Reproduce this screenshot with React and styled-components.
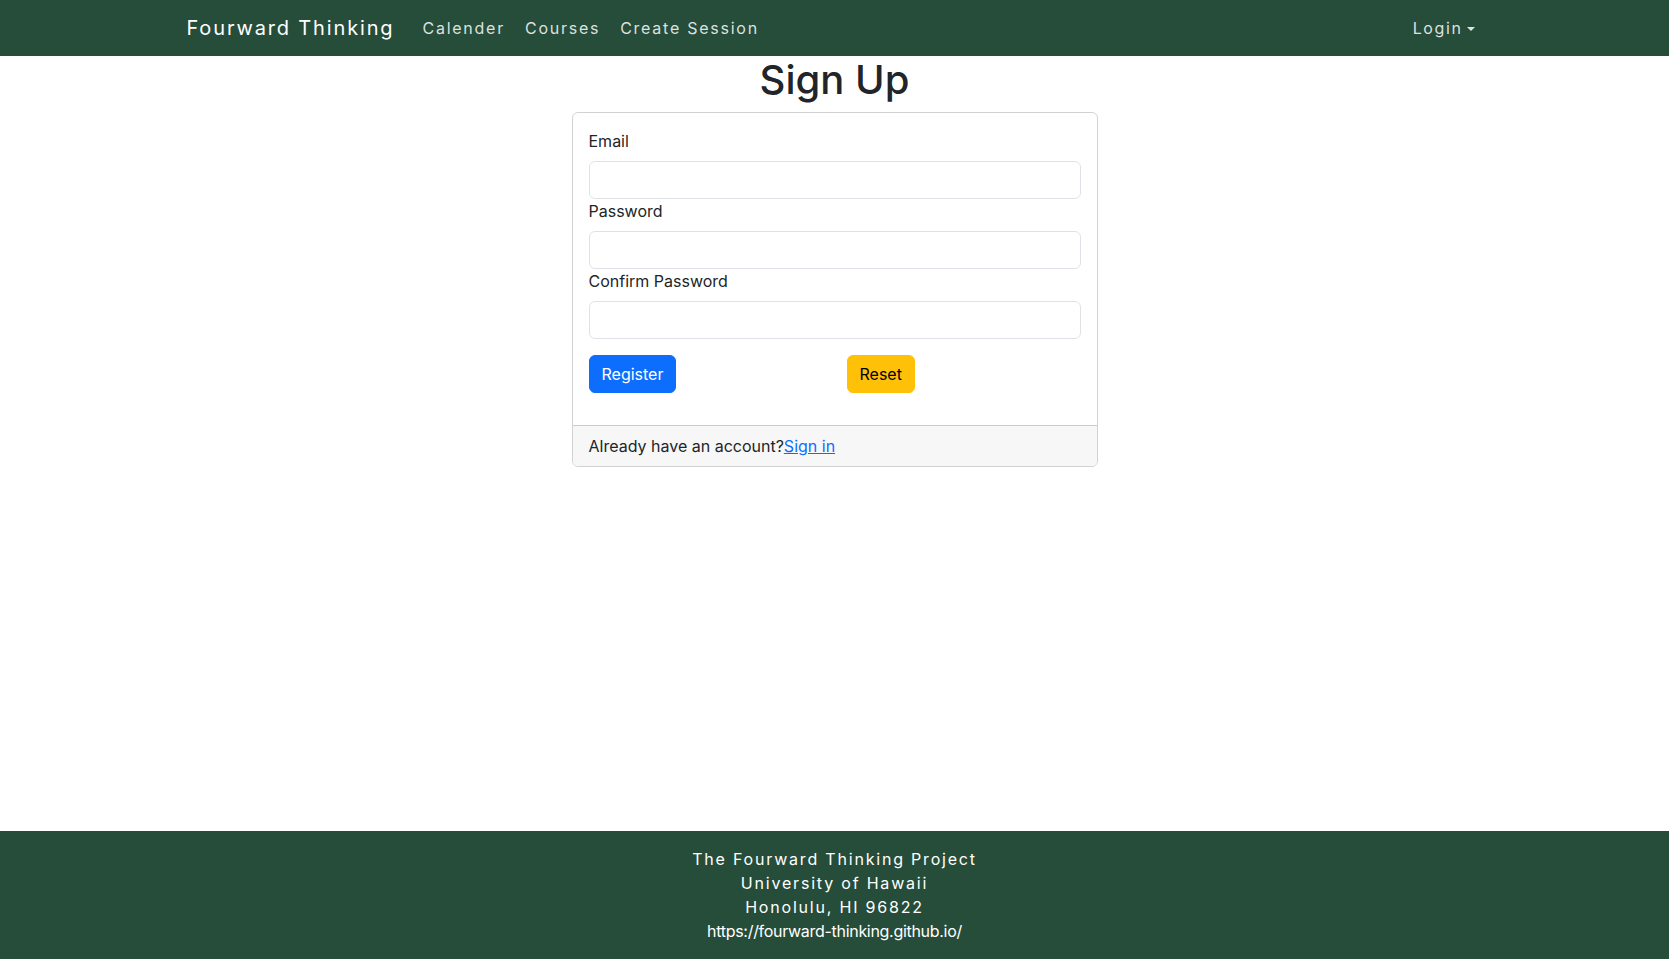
import React from 'react';
import styled, { createGlobalStyle } from 'styled-components';

const GlobalStyle = createGlobalStyle`
  *, *::before, *::after {
    box-sizing: border-box;
  }

  body {
    margin: 0;
    font-family: Inter, "Noto Sans", sans-serif;
    font-size: 16px;
    line-height: 1.5;
    color: #212529;
    background-color: #fff;
  }
`;

const Page = styled.div`
  display: flex;
  flex-direction: column;
  min-height: 100vh;
`;

const Container = styled.div`
  width: 100%;
  max-width: 1320px;
  margin: 0 auto;
  padding: 0 12px;
`;

const NavBar = styled.nav`
  background-color: #264d3a;
  padding: 8px 0;
`;

const NavInner = styled(Container)`
  display: flex;
  align-items: center;
`;

const Brand = styled.a`
  font-size: 20px;
  line-height: 30px;
  padding: 5px 0;
  margin-right: 18px;
  letter-spacing: 1.85px;
  color: #fff;
  text-decoration: none;
`;

const NavLink = styled.a`
  display: inline-flex;
  align-items: center;
  margin: 0 2px;
  padding: 8px;
  font-size: 16px;
  line-height: 24px;
  letter-spacing: 1.75px;
  color: rgba(255, 255, 255, 0.85);
  text-decoration: none;
  cursor: pointer;
`;

const Dropdown = styled(NavLink)`
  margin: 0 0 0 auto;
  letter-spacing: 1.6px;

  &::after {
    content: '';
    display: inline-block;
    margin-left: 4px;
    margin-top: 1px;
    border-top: 4.8px solid currentColor;
    border-left: 4.8px solid transparent;
    border-right: 4.8px solid transparent;
  }
`;

const Main = styled.main`
  flex: 1;
`;

const Title = styled.h1`
  margin: 0 0 8px;
  font-size: 40px;
  font-weight: 500;
  line-height: 1.2;
  text-align: center;
`;

const Card = styled.div`
  width: 526px;
  margin: 0 auto;
  border: 1px solid rgba(0, 0, 0, 0.175);
  border-radius: 6px;
  overflow: hidden;
`;

const CardBody = styled.form`
  padding: 16px;
`;

const Label = styled.label`
  display: block;
  margin-bottom: 8px;
`;

const Input = styled.input`
  display: block;
  width: 100%;
  height: 38px;
  padding: 6px 12px;
  font: inherit;
  border: 1px solid #dee2e6;
  border-radius: 6px;
  background: #fff;
  outline: none;
`;

const ButtonRow = styled.div`
  display: grid;
  grid-template-columns: 1fr 1fr;
  margin: 16px -12px 16px;
`;

const ButtonCell = styled.div`
  padding: 0 12px;
`;

const Button = styled.button`
  padding: 6px 12px;
  font: inherit;
  line-height: 24px;
  border: 1px solid ${({ $bg }) => $bg};
  border-radius: 6px;
  background-color: ${({ $bg }) => $bg};
  color: ${({ $color }) => $color};
  cursor: pointer;
`;

const CardFooter = styled.div`
  padding: 8px 16px;
  background-color: #f7f7f7;
  border-top: 1px solid rgba(0, 0, 0, 0.175);
`;

const SignInLink = styled.a`
  color: #0d6efd;
  text-decoration: underline;
`;

const Footer = styled.footer`
  background-color: #264d3a;
  padding: 16px 0;
  text-align: center;
  color: #fff;
`;

const FooterLine = styled.div`
  letter-spacing: ${({ $spaced }) => ($spaced ? '1.8px' : '-0.3px')};
`;

const FooterLink = styled.a`
  color: #fff;
  text-decoration: none;
`;

const fields = [
  { id: 'email', label: 'Email', type: 'email' },
  { id: 'password', label: 'Password', type: 'password' },
  { id: 'confirm', label: 'Confirm Password', type: 'password' },
];

const App = () => (
  <>
    <GlobalStyle />
    <Page>
      <NavBar>
        <NavInner>
          <Brand>Fourward Thinking</Brand>
          <NavLink>Calender</NavLink>
          <NavLink>Courses</NavLink>
          <NavLink>Create Session</NavLink>
          <Dropdown>Login</Dropdown>
        </NavInner>
      </NavBar>
      <Main>
        <Title>Sign Up</Title>
        <Card>
          <CardBody onSubmit={(e) => e.preventDefault()}>
            {fields.map((f) => (
              <div key={f.id}>
                <Label htmlFor={f.id}>{f.label}</Label>
                <Input id={f.id} type={f.type} />
              </div>
            ))}
            <ButtonRow>
              <ButtonCell>
                <Button type="submit" $bg="#0d6efd" $color="#fff">Register</Button>
              </ButtonCell>
              <ButtonCell>
                <Button type="reset" $bg="#ffc107" $color="#000">Reset</Button>
              </ButtonCell>
            </ButtonRow>
          </CardBody>
          <CardFooter>
            Already have an account?<SignInLink href="#">Sign in</SignInLink>
          </CardFooter>
        </Card>
      </Main>
      <Footer>
        <FooterLine $spaced>The Fourward Thinking Project</FooterLine>
        <FooterLine $spaced>University of Hawaii</FooterLine>
        <FooterLine $spaced>Honolulu, HI 96822</FooterLine>
        <FooterLine>
          <FooterLink href="#">https://fourward-thinking.github.io/</FooterLink>
        </FooterLine>
      </Footer>
    </Page>
  </>
);

export default App;
